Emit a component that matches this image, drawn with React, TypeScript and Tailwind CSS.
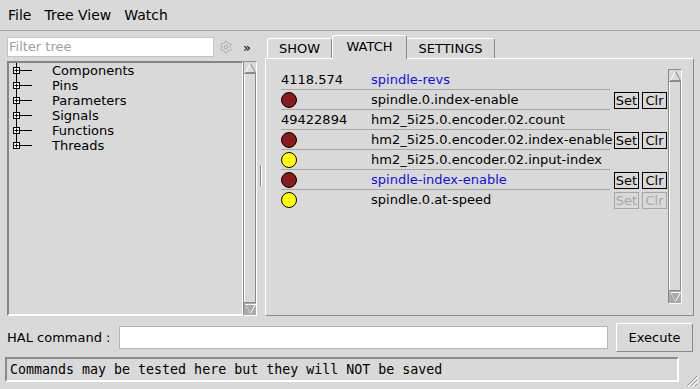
import { Settings } from "lucide-react";

const treeItems = ["Components", "Pins", "Parameters", "Signals", "Functions", "Threads"];

type WatchRow = {
  value?: string;
  led?: "red" | "yellow";
  name: string;
  signal?: boolean;
  buttons?: "on" | "off";
};

const watchRows: WatchRow[] = [
  { value: "4118.574", name: "spindle-revs", signal: true },
  { led: "red", name: "spindle.0.index-enable", buttons: "on" },
  { value: "49422894", name: "hm2_5i25.0.encoder.02.count" },
  { led: "red", name: "hm2_5i25.0.encoder.02.index-enable", buttons: "on" },
  { led: "yellow", name: "hm2_5i25.0.encoder.02.input-index" },
  { led: "red", name: "spindle-index-enable", signal: true, buttons: "on" },
  { led: "yellow", name: "spindle.0.at-speed", buttons: "off" },
];

function Scrollbar({ className }: { className: string }) {
  return (
    <div
      className={`flex flex-col w-[14px] border border-l-[#8a8a8a] border-t-[#8a8a8a] border-r-white border-b-white ${className}`}
    >
      {/* up arrow */}
      <div className="h-[12px] flex items-center justify-center border-b border-[#8a8a8a]">
        <svg width="11" height="10" viewBox="0 0 11 10">
          <polyline points="0.5,9.5 5.5,0.5" fill="none" stroke="#ffffff" />
          <polyline points="5.5,0.5 10.5,9.5 0.5,9.5" fill="none" stroke="#8a8a8a" />
        </svg>
      </div>
      {/* track */}
      <div className="flex-1 border-l border-l-white border-r border-r-[#8a8a8a]" />
      {/* down arrow */}
      <div className="h-[13px] flex items-center justify-center bg-[#a9a9a9] border-t border-[#8a8a8a]">
        <svg width="11" height="10" viewBox="0 0 11 10">
          <polyline points="0.5,0.5 10.5,0.5 5.5,9.5" fill="none" stroke="#ffffff" />
          <polyline points="0.5,0.5 5.5,9.5" fill="none" stroke="#d0d0d0" />
        </svg>
      </div>
    </div>
  );
}

function TreeRow({ label, last }: { label: string; last: boolean }) {
  return (
    <div className="h-[15px] flex items-center">
      <svg width="43" height="15" viewBox="0 0 43 15" className="shrink-0">
        <line x1="7.5" y1="0" x2="7.5" y2={last ? 7.5 : 15} stroke="#000" />
        <line x1="10.5" y1="7.5" x2="23" y2="7.5" stroke="#000" />
        <rect x="4.5" y="4.5" width="6" height="6" fill="#fff" stroke="#000" />
        <line x1="5.5" y1="7.5" x2="9.5" y2="7.5" stroke="#000" />
        <line x1="7.5" y1="5.5" x2="7.5" y2="9.5" stroke="#000" />
      </svg>
      <span className="leading-none">{label}</span>
    </div>
  );
}

function SmallButton({ label, enabled }: { label: string; enabled: boolean }) {
  return (
    <div
      className={`w-[25px] h-[17px] flex items-center justify-center border leading-none ${
        enabled ? "border-black text-black" : "border-[#a6a6a6] text-[#a8a8a8]"
      }`}
    >
      {label}
    </div>
  );
}

export default function App() {
  return (
    <div className="w-[700px] h-[389px] bg-[#d9d9d9] font-['DejaVu_Sans',sans-serif] text-[13px] text-black relative overflow-hidden">
      {/* Menu bar */}
      <div className="h-[31px] flex items-center gap-[13px] pl-[8px] text-[14px] border-b border-[#a6a6a6]">
        <span>File</span>
        <span>Tree View</span>
        <span>Watch</span>
      </div>

      {/* Main area */}
      <div className="flex h-[285px]">
        {/* Left: filter + tree */}
        <div className="ml-[7px] w-[250px] flex flex-col">
          <div className="mt-[6px] h-[20px] flex items-center">
            <div className="w-[207px] h-[20px] bg-white border border-[#c4c4c4] flex items-center pl-[1px] text-[#a0a0a0]">
              Filter tree
            </div>
            <Settings size={14} strokeWidth={1.4} color="#a3a3a3" className="ml-[5px]" />
            <span className="ml-[10px] text-[13px] leading-none">»</span>
          </div>
          <div className="mt-[4px] flex h-[255px]">
            <div className="w-[236px] h-full border-l-2 border-t-2 border-l-[#858585] border-t-[#858585] border-r border-b-2 border-r-white border-b-white">
              {treeItems.map((t, i) => (
                <TreeRow key={t} label={t} last={i === treeItems.length - 1} />
              ))}
            </div>
            <Scrollbar className="h-full" />
          </div>
        </div>

        {/* Splitter */}
        <div className="w-[8px] flex items-start justify-center">
          <div className="mt-[134px] h-[21px] w-[2px] border-l border-[#8a8a8a] border-r border-r-white" />
        </div>

        {/* Right: tabs */}
        <div className="w-[429px] flex flex-col">
          <div className="mt-[4px] h-[23px] flex items-end pl-[2px]">
            <div className="h-[20px] w-[65px] flex items-center justify-center border-l border-t border-r border-l-white border-t-white border-r-[#8a8a8a] rounded-tl-[3px] rounded-tr-[3px]">
              SHOW
            </div>
            <div className="relative z-10 -mb-px h-[24px] w-[75px] bg-[#d9d9d9] flex items-center justify-center pb-[2px] border-l border-t border-r border-l-white border-t-white border-r-[#8a8a8a] rounded-tl-[3px] rounded-tr-[3px]">
              WATCH
            </div>
            <div className="h-[20px] w-[88px] flex items-center justify-center border-t border-r border-t-white border-r-[#8a8a8a] rounded-tr-[3px]">
              SETTINGS
            </div>
          </div>
          <div className="h-[258px] border border-l-white border-t-white border-r-[#8a8a8a] border-b-[#8a8a8a] flex pl-[15px] pr-[11px] pt-[10px]">
            <div className="flex-1 pt-[1px]">
              {watchRows.map((r, i) => (
                <div key={r.name} className="h-[20px] flex items-center">
                  <div
                    className={`w-[329px] h-[20px] flex items-center ${
                      i < watchRows.length - 1 ? "border-b border-[#a8a8a8]" : ""
                    }`}
                  >
                    <div className="w-[90px] shrink-0 flex items-center">
                      {r.led ? (
                        <div
                          className={`w-[16px] h-[16px] rounded-full border border-black ${
                            r.led === "red" ? "bg-[#8b1a1a]" : "bg-[#ffff00]"
                          }`}
                        />
                      ) : (
                        <span>{r.value}</span>
                      )}
                    </div>
                    <span className={`whitespace-nowrap ${r.signal ? "text-[#1010e0]" : ""}`}>{r.name}</span>
                  </div>
                  {r.buttons && (
                    <div className="ml-[4px] flex gap-[3px]">
                      <SmallButton label="Set" enabled={r.buttons === "on"} />
                      <SmallButton label="Clr" enabled={r.buttons === "on"} />
                    </div>
                  )}
                </div>
              ))}
            </div>
            <Scrollbar className="h-[235px]" />
          </div>
        </div>
      </div>

      {/* HAL command row */}
      <div className="mt-[7px] h-[29px] flex items-center">
        <span className="ml-[7px] w-[112px]">HAL command :</span>
        <div className="w-[489px] h-[23px] bg-white border border-[#b4b4b4]" />
        <div className="ml-[8px] w-[77px] h-[29px] flex items-center justify-center border border-l-white border-t-white border-r-[#8a8a8a] border-b-[#8a8a8a]">
          Execute
        </div>
      </div>

      {/* Status bar */}
      <div className="mt-[5px] ml-[5px] w-[674px] h-[25px] flex items-center pl-[3px] border-l-2 border-t-2 border-l-[#8a8a8a] border-t-[#8a8a8a] border-r-2 border-b-2 border-r-white border-b-white font-['DejaVu_Sans_Mono',monospace] text-[13.3px]">
        Commands may be tested here but they will NOT be saved
      </div>

      {/* Size grip */}
      <svg width="12" height="12" viewBox="0 0 12 12" className="absolute right-[2px] bottom-[2px]">
        <line x1="11" y1="1" x2="1" y2="11" stroke="#9a9a9a" />
        <line x1="11" y1="5" x2="5" y2="11" stroke="#9a9a9a" />
        <line x1="11" y1="9" x2="9" y2="11" stroke="#9a9a9a" />
        <line x1="12" y1="2" x2="2" y2="12" stroke="#ffffff" />
        <line x1="12" y1="6" x2="6" y2="12" stroke="#ffffff" />
      </svg>
    </div>
  );
}
